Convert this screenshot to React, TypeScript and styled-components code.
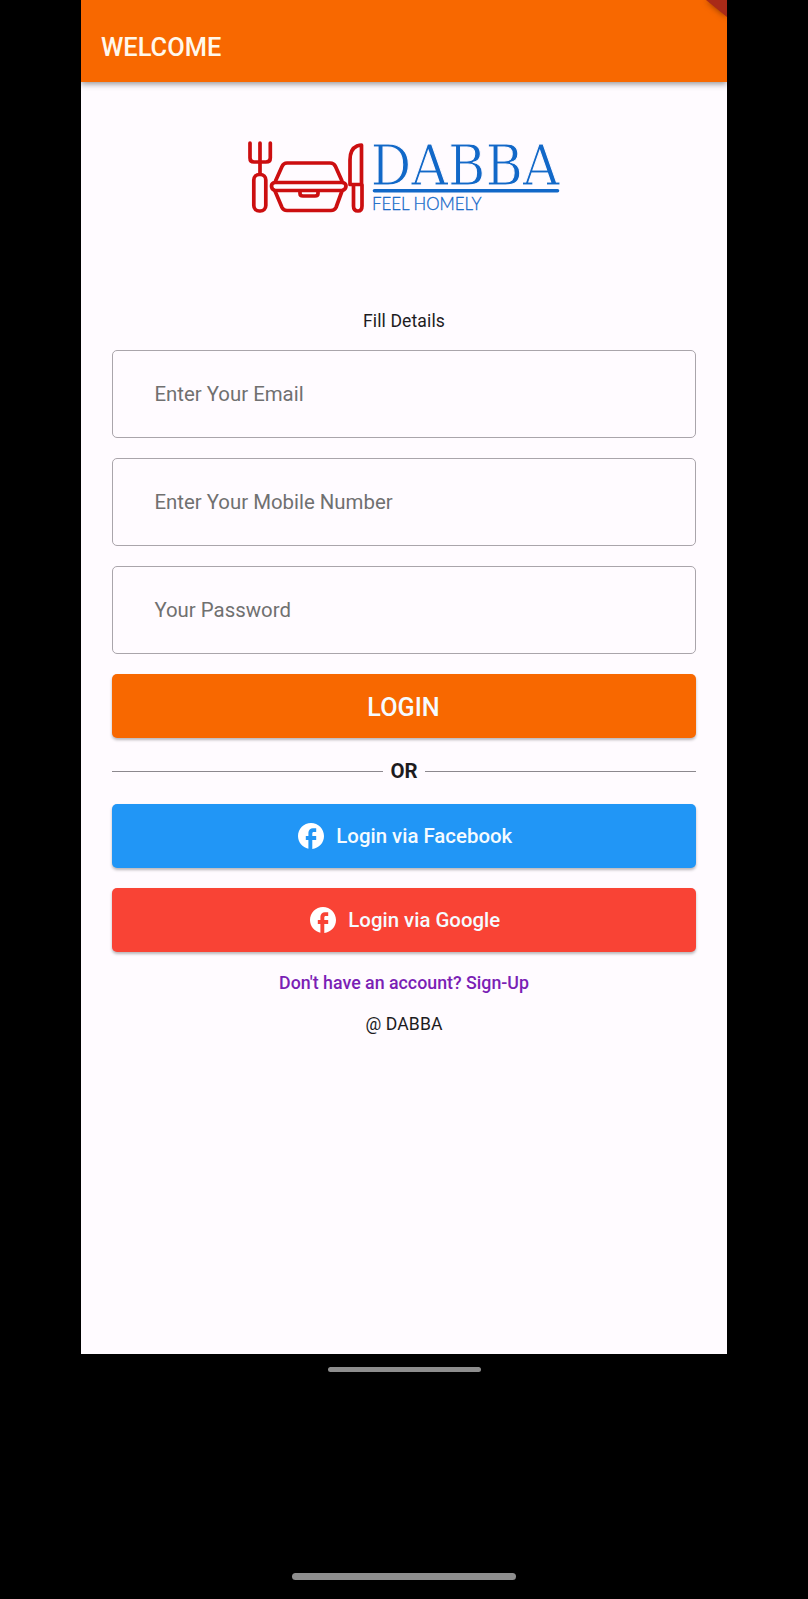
import React from 'react';
import styled, { createGlobalStyle } from 'styled-components';

const GlobalStyle = createGlobalStyle`
  * { box-sizing: border-box; }
  body { margin: 0; background: #000; font-family: Roboto, 'Liberation Sans', sans-serif; }
`;

const Device = styled.div`
  display: flex;
  flex-direction: column;
  align-items: center;
  height: 1599px;
  background: #000;
`;

const Screen = styled.main`
  display: flex;
  flex-direction: column;
  width: 646px;
  height: 1354px;
  background: #fffbff;
  overflow: hidden;
`;

const AppBar = styled.header`
  position: relative;
  flex: none;
  height: 81.5px;
  padding: 32.5px 20px 0;
  background: #f86800;
  box-shadow: 0 2px 6px rgba(0, 0, 0, 0.42);
`;

const Title = styled.h1`
  margin: 0;
  font-size: 25.4px;
  line-height: 29px;
  font-weight: 500;
  color: #fff8ec;
`;

const Ribbon = styled.div`
  position: absolute;
  top: 0;
  right: 0;
  filter: drop-shadow(0 0 3px rgba(60, 20, 0, 0.6));

  &::after {
    content: '';
    display: block;
    width: 21px;
    height: 17px;
    background: #a92a18;
    clip-path: polygon(0 0, 100% 0, 100% 100%);
  }
`;

const Content = styled.div`
  display: flex;
  flex-direction: column;
  padding: 52.5px 31.4px 0;
`;

const Logo = styled.svg`
  display: block;
  width: 330px;
  height: 90px;
  margin: 0 auto 0 127.6px;
`;

const Caption = styled.p<{ $gap?: number }>`
  margin: ${(p) => p.$gap ?? 0}px 0 0;
  font-size: 17.6px;
  line-height: 20px;
  letter-spacing: 0.1px;
  text-align: center;
  color: #1d1b1e;
`;

const Fields = styled.form`
  display: flex;
  flex-direction: column;
  gap: 20.2px;
  margin-top: 19px;
`;

const Field = styled.input`
  width: 100%;
  height: 88px;
  padding: 0 41px;
  border: 1.4px solid #aaa5ab;
  border-radius: 5px;
  outline: none;
  background: transparent;
  font: 400 20.4px Roboto, sans-serif;
  letter-spacing: 0;
  color: #1d1b1e;

  &::placeholder { color: #707070; opacity: 1; }
`;

const Button = styled.button<{ $color: string; $top: number; $primary?: boolean }>`
  display: flex;
  align-items: center;
  justify-content: center;
  gap: 12.5px;
  width: 100%;
  height: 64px;
  margin-top: ${(p) => p.$top}px;
  padding: ${(p) => (p.$primary ? '2px 1px 0 0' : '0 0 0 2px')};
  border: 0;
  border-radius: 5px;
  background: ${(p) => p.$color};
  box-shadow: 0 2px 3px rgba(0, 0, 0, 0.28);
  font: 500 ${(p) => (p.$primary ? 25.2 : 20.4)}px Roboto, sans-serif;
  color: #f5fbff;
`;

const Divider = styled.div`
  display: flex;
  align-items: center;
  gap: 7px;
  height: 24px;
  margin-top: 21px;
  font-size: 20.4px;
  font-weight: 700;
  color: #1d1b1e;

  &::before, &::after {
    content: '';
    flex: 1;
    height: 1.3px;
    background: #8c888e;
  }
`;

const SignUp = styled.a`
  margin-top: 21px;
  font-size: 17.8px;
  line-height: 20px;
  font-weight: 500;
  text-align: center;
  color: #7b1fb5;
`;

const NavHandle = styled.div<{ $width: number; $height: number; $top: number }>`
  flex: none;
  width: ${(p) => p.$width}px;
  height: ${(p) => p.$height}px;
  margin-top: ${(p) => p.$top}px;
  border-radius: 4px;
  background: #8e8e8e;
`;

const FacebookIcon = () => (
  <svg width="26" height="26" viewBox="2 2 20 20" fill="#fff" aria-hidden="true">
    <path d="M22 12c0-5.52-4.48-10-10-10S2 6.48 2 12c0 4.84 3.44 8.87 8 9.8V15H8v-3h2V9.5C10 7.57 11.57 6 13.5 6H16v3h-2c-.55 0-1 .45-1 1v2h3v3h-3v6.95c5.05-.5 9-4.76 9-9.95z" />
  </svg>
);

const DabbaLogo = () => (
  <Logo viewBox="240 134 330 90" role="img" aria-label="Dabba, feel homely">
    <g fill="none" stroke="#cc0e10" strokeWidth="3.7" strokeLinecap="round" strokeLinejoin="round">
      <path d="M250 143V158Q250 162 254 162H266Q270.300 162 270.300 158V143M260 143V174" />
      <rect x="253.800" y="174.500" width="12" height="36.500" rx="5.500" />
      <path d="M275.500 181L282 166.500Q283.500 163 287 163H330Q334 163 335.500 166.500L342 181" />
      <path d="M275 182.500H342Q346 183 346 186Q346 189.500 342 190.500H275Q271.500 189.500 271.500 186Q271.500 183 275 182.500Z" />
      <path d="M275 191L282 207.500Q283.500 210.500 287 210.500H331Q334.500 210.500 336 207.500L342 191" />
      <path d="M300 191.500V193.500Q300 196 303 196H315Q318 196 318 193.500V191.500" />
      <path d="M361.500 145V184.500H350V160Q350 149 357 146Q359.500 145 361.500 145Z" />
      <path d="M353.500 185V206Q353.500 211 358 211Q362 211 362 206V185" />
    </g>
    <text
      x="370.500"
      y="185"
      fontFamily="'DejaVu Serif Condensed', 'DejaVu Serif', serif"
      fontSize="55.500"
      textLength="189"
      lengthAdjust="spacingAndGlyphs"
      fill="#1268c8"
      stroke="#fffbff"
      strokeWidth="1"
    >
      DABBA
    </text>
    <path d="M374.500 190.800H557.500" stroke="#1268c8" strokeWidth="3.600" strokeLinecap="round" />
    <text
      x="372"
      y="210"
      fontFamily="Lato, sans-serif"
      fontWeight="300"
      fontSize="18"
      textLength="109.500"
      lengthAdjust="spacingAndGlyphs"
      fill="#1268c8"
      stroke="#1268c8"
      strokeWidth="0.300"
    >
      FEEL HOMELY
    </text>
  </Logo>
);

export default function App() {
  return (
    <>
      <GlobalStyle />
      <Device>
        <Screen>
          <AppBar>
            <Title>WELCOME</Title>
            <Ribbon />
          </AppBar>
          <Content>
            <DabbaLogo />
            <Caption $gap={87}>Fill Details</Caption>
            <Fields>
              <Field type="email" placeholder="Enter Your Email" />
              <Field type="tel" placeholder="Enter Your Mobile Number" />
              <Field type="password" placeholder="Your Password" />
            </Fields>
            <Button $color="#f86800" $top={20} $primary>LOGIN</Button>
            <Divider>OR</Divider>
            <Button $color="#2196f6" $top={21}>
              <FacebookIcon />
              Login via Facebook
            </Button>
            <Button $color="#f94335" $top={20}>
              <FacebookIcon />
              Login via Google
            </Button>
            <SignUp>Don't have an account? Sign-Up</SignUp>
            <Caption $gap={21}>@ DABBA</Caption>
          </Content>
        </Screen>
        <NavHandle $width={153} $height={5} $top={13} />
        <NavHandle $width={224} $height={7} $top={201} />
      </Device>
    </>
  );
}
